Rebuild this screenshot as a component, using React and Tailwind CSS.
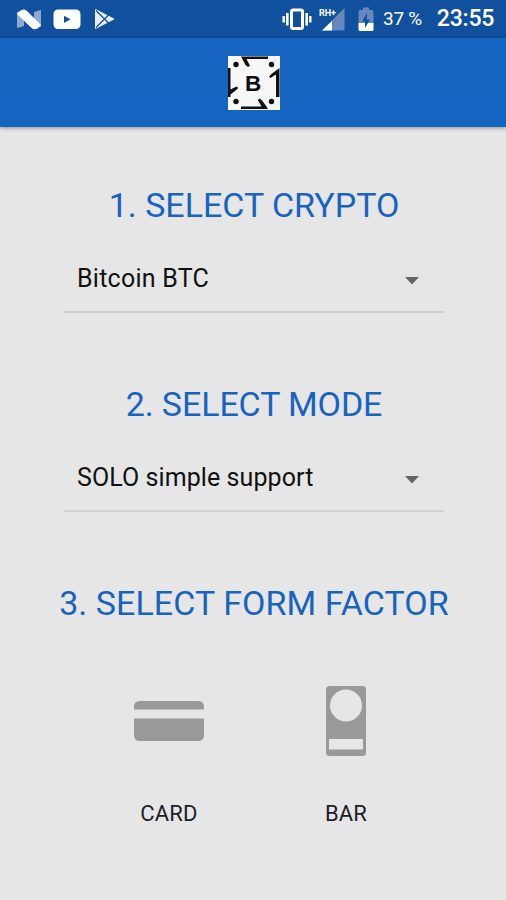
import React from "react";

function NougatIcon() {
  return (
    <svg className="h-[22px] w-[26px]" viewBox="0 0 26 22">
      <path d="M1 4 L8 2.5 V18 L1 20Z M18 4 L25 2 V19 L18 18Z" fill="#8fa9d1" />
      <path d="M1 6 Q4 1.5 8 1.5 Q10 1.5 12 4 L25 17 Q22 21.5 18 21.2 Q16.5 21 14.5 19Z" fill="#fff" />
    </svg>
  );
}

function YoutubeIcon() {
  return (
    <svg className="h-[22px] w-[28px]" viewBox="0 0 28 22">
      <rect x="0.5" y="1.5" width="27" height="19.5" rx="4.5" fill="#fff" />
      <path d="M11 7.7 L17.5 11.3 L11 14.9Z" fill="#11509c" />
    </svg>
  );
}

function PlayIcon() {
  return (
    <svg className="h-[22px] w-[22px]" viewBox="0 0 22 22">
      <path d="M1.5 1.5 L20 11 L1.5 20.5Z" fill="#e8eefa" stroke="#e8eefa" strokeLinejoin="round" />
      <path d="M2 2.5 L15.5 16 M2 19.5 L15.5 6" stroke="#11509c" strokeWidth="1.2" />
    </svg>
  );
}

function VibrateIcon() {
  return (
    <svg className="h-[24px] w-[30px]" viewBox="0 0 30 24" fill="none" stroke="#fff">
      <rect x="9.5" y="3" width="11" height="18.5" rx="1.5" strokeWidth="3" />
      <path d="M5.3 6 V18.5 M24.7 6 V18.5" strokeWidth="2.6" />
      <path d="M1.7 9 V15.5 M28.3 9 V15.5" strokeWidth="2.4" />
    </svg>
  );
}

function SignalIcon() {
  return (
    <svg className="h-[24px] w-[26px]" viewBox="0 0 26 24">
      <path d="M25.5 1 V23.5 H3Z" fill="#6688bd" />
      <path d="M13 14 V23.5 H3Z" fill="#fff" />
      <rect x="0" y="0" width="16" height="10" fill="#11509c" />
      <text x="0" y="8.6" fontSize="9" fontWeight="700" fill="#fff" fontFamily="Roboto, sans-serif" textLength="17" lengthAdjust="spacingAndGlyphs">RH+</text>
    </svg>
  );
}

function BatteryIcon() {
  return (
    <svg className="h-[25px] w-[16px]" viewBox="0 0 16 25">
      <path d="M5 0.5 H11 V3 H14 Q15.5 3 15.5 4.5 V16 H0.5 V4.5 Q0.5 3 2 3 H5Z" fill="#6688bd" />
      <path d="M0.5 16 H15.5 V22.5 Q15.5 24 14 24 H2 Q0.5 24 0.5 22.5Z" fill="#fff" />
      <path d="M9 6 L4 14.5 H7 V21 L12 12.5 H9Z" fill="#11509c" />
    </svg>
  );
}

function Logo() {
  return (
    <svg className="h-[54px] w-[52px]" viewBox="0 0 52 54">
      <rect width="52" height="54" fill="#f7f7f7" />
      <g fill="#111">
        <path d="M13 0.5 H40 V3 H18.5 L22 9.8 L20 11 L17.5 9Z" />
        <path d="M51.5 12 V41 H48 V18.5 L42.5 22 L41 20.5 L44 17.5Z" />
        <path d="M0 12 H2.5 V33.5 L8.5 30.5 L10.3 32 L7 35 L2.5 38.5 V41 H0Z" />
        <path d="M13 50.5 H33.5 L29.8 44 L31.8 42.6 L34.5 45 L39.5 52 V53 H13Z" />
        <circle cx="8" cy="8.5" r="2.7" />
        <circle cx="43.5" cy="8.5" r="2.7" />
        <circle cx="8" cy="45.5" r="2.7" />
        <circle cx="43.5" cy="45.5" r="2.7" />
      </g>
      <text x="25" y="35" textAnchor="middle" fontSize="22.5" fontWeight="700" fill="#111" fontFamily="Liberation Sans, Arial, sans-serif">B</text>
    </svg>
  );
}

function Section({ title, value, titleClass, valueClass }) {
  return (
    <section className="flex h-[199px] flex-col items-center pl-[2px]">
      <h2 className={`h-10 text-[34px] leading-10 whitespace-nowrap text-[#1763c0] ${titleClass}`}>{title}</h2>
      <div className="mt-5 flex h-[68px] w-[380px] items-center justify-between border-b-2 border-[#d0d0d0] pt-[2px] pr-6 pl-[13px]">
        <span className={`text-[25px] leading-[30px] whitespace-nowrap text-[#111] ${valueClass}`}>{value}</span>
        <svg className="mt-1 h-2 w-4" viewBox="0 0 16 8">
          <path d="M1 0 H15 L8 7.5Z" fill="#666" />
        </svg>
      </div>
    </section>
  );
}

export default function App() {
  return (
    <div className="flex h-[900px] w-[506px] flex-col overflow-hidden bg-[#e6e6e6] font-['Roboto',sans-serif]">
      <div className="flex h-[38px] shrink-0 items-center bg-[#11509c] pl-4 text-white">
        <NougatIcon />
        <div className="ml-[11px] flex"><YoutubeIcon /></div>
        <div className="ml-[13px] flex"><PlayIcon /></div>
        <div className="ml-[166px] flex"><VibrateIcon /></div>
        <div className="ml-[7px] flex"><SignalIcon /></div>
        <div className="ml-[13px] flex"><BatteryIcon /></div>
        <span className="ml-[9px] text-[19px] leading-6 tracking-[-0.3px] whitespace-nowrap">37 %</span>
        <span className="ml-[15px] text-[23px] leading-6 font-medium tracking-[-0.2px]">23:55</span>
      </div>
      <header className="z-10 flex h-[89px] shrink-0 items-center justify-center bg-[#1565c0] pl-px shadow-[0_1px_4px_rgba(0,0,0,0.4)]">
        <Logo />
      </header>
      <main className="flex flex-col pt-[58px]">
        <Section title="1. SELECT CRYPTO" value="Bitcoin BTC" titleClass="" valueClass="tracking-[0.25px]" />
        <Section title="2. SELECT MODE" value="SOLO simple support" titleClass="tracking-[-0.1px]" valueClass="tracking-[0.08px]" />
        <h2 className="h-10 pl-[2px] text-center text-[34px] leading-10 tracking-[0.06px] whitespace-nowrap text-[#1763c0]">3. SELECT FORM FACTOR</h2>
        <div className="mt-[55px] grid grid-cols-[176px_178px] pl-[81px]">
          <div className="flex flex-col items-center">
            <div className="flex h-[86px] items-center">
              <svg className="h-10 w-[70px]" viewBox="0 0 70 40" fill="#999">
                <path d="M0 8.5 V6 Q0 0 6 0 H64 Q70 0 70 6 V8.5Z" />
                <path d="M0 17.5 H70 V34 Q70 40 64 40 H6 Q0 40 0 34Z" />
              </svg>
            </div>
            <span className="mt-[37px] text-[22px] leading-[26px] tracking-[0.2px] text-[#1b1e27]">CARD</span>
          </div>
          <div className="flex flex-col items-center">
            <div className="flex h-[86px] items-center">
              <svg className="h-[70px] w-10" viewBox="0 0 40 70">
                <rect width="40" height="70" rx="3.5" fill="#999" />
                <circle cx="20" cy="19.5" r="16" fill="#e6e6e6" />
                <rect x="3" y="53" width="34" height="10.5" fill="#e6e6e6" />
              </svg>
            </div>
            <span className="mt-[37px] text-[22px] leading-[26px] tracking-[0.2px] text-[#1b1e27]">BAR</span>
          </div>
        </div>
      </main>
    </div>
  );
}
